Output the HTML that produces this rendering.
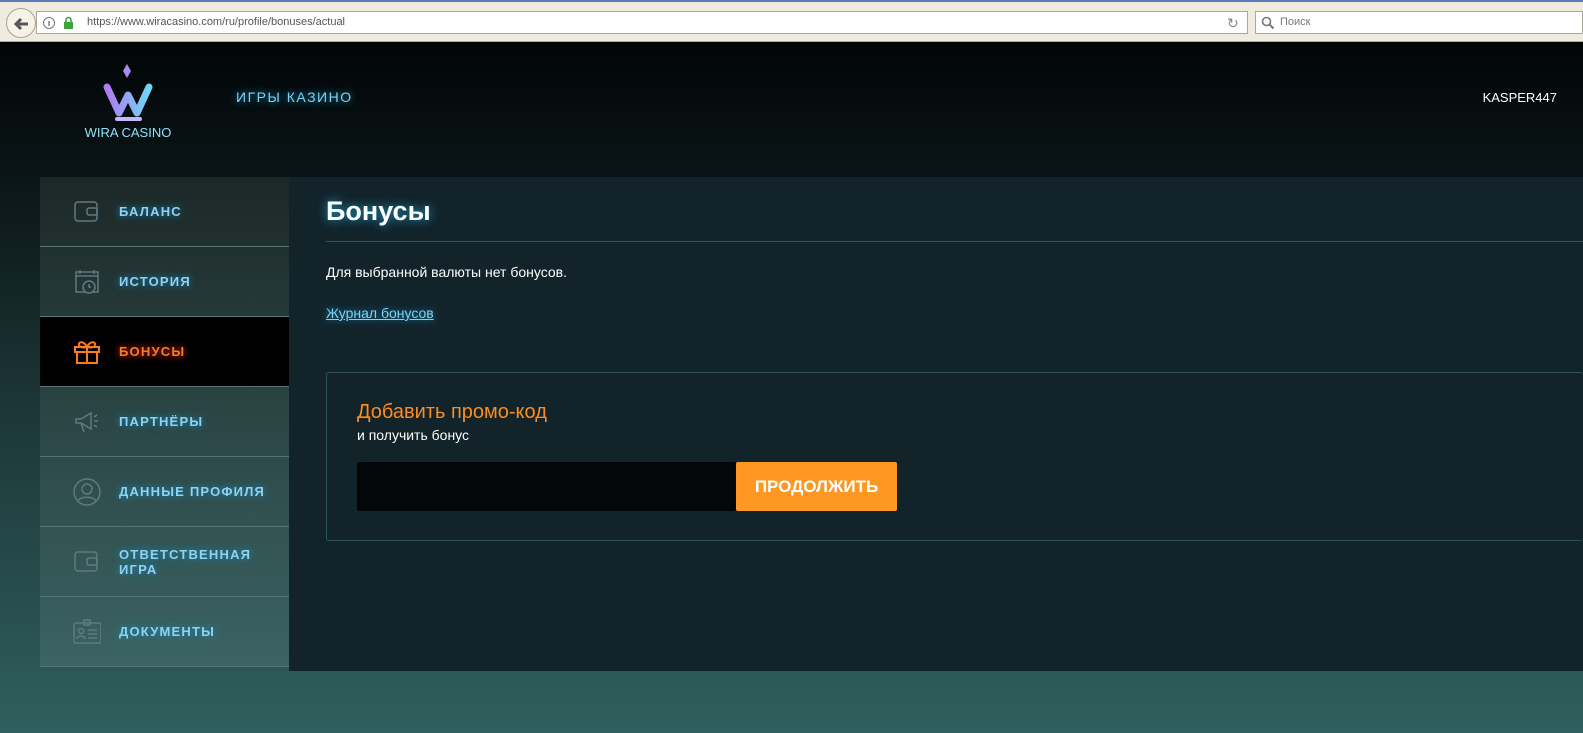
<!DOCTYPE html>
<html><head><meta charset="utf-8"><style>
*{margin:0;padding:0;box-sizing:border-box}
body{width:1583px;height:733px;overflow:hidden;font-family:"Liberation Sans","DejaVu Sans",sans-serif;background:linear-gradient(180deg,#020506 42px,#0a1416 170px,#1c3536 400px,#2f5f5e 733px);position:relative}
.bar{position:absolute;left:0;top:0;width:1583px;height:42px;background:#efebde;border-top:2px solid #5a7ab8;border-bottom:1px solid #aaa}
.back{position:absolute;left:6px;top:6px;width:30px;height:30px;border-radius:50%;border:1px solid #a9a48f;background:#f5f2e8}
.url{position:absolute;left:36px;top:9px;width:1212px;height:23px;background:#fff;border:1px solid #aba89a;font-size:11px;color:#555;padding:4px 0 0 50px}
.search{position:absolute;left:1255px;top:9px;width:328px;height:23px;background:#fff;border:1px solid #aba89a;font-size:11px;color:#777;padding:4px 0 0 24px}
.nav{position:absolute;left:236px;top:89px;color:#7fd2f0;font-size:14px;letter-spacing:1.5px;text-shadow:0 0 8px #1aa0d8}
.user{position:absolute;right:26px;top:90px;color:#fff;font-size:13px}
.side{position:absolute;left:40px;top:177px;width:249px;height:490px}
.it{height:70px;border-bottom:1px solid #567474;display:flex;align-items:center;padding-left:33px;color:#8fd3f2;font-size:13px;font-weight:bold;letter-spacing:1.2px;text-shadow:0 0 8px #1a90c8}
.it svg{width:28px;height:28px;margin-right:18px;flex:none}
.act{background:#000;color:#ff7a1a;text-shadow:0 0 8px #ff3a00}
.panel{position:absolute;left:289px;top:177px;width:1294px;height:494px;background:#12232a}
h1{position:absolute;left:37px;top:19px;color:#fff;font-size:27px;text-shadow:0 0 10px #1fa3d0}
.hr{position:absolute;left:37px;top:64px;right:0;height:1px;background:#2c5858}
.t{position:absolute;left:37px;top:87px;color:#fff;font-size:14px}
.lk{position:absolute;left:37px;top:128px;color:#7fd2f0;font-size:14px;text-decoration:underline;text-shadow:0 0 8px #1a90c8}
.box{position:absolute;left:37px;top:195px;right:0;height:169px;border:1px solid #2c5656;border-right:none;border-radius:3px}
.box h2{position:absolute;left:30px;top:28px;color:#ff8c1e;font-size:20px;font-weight:normal}
.box p{position:absolute;left:30px;top:54px;color:#fff;font-size:14px}
.in{position:absolute;left:30px;top:89px;width:379px;height:49px;background:#030708;border-radius:2px}
.btn{position:absolute;left:409px;top:89px;width:161px;height:49px;background:#ff9822;color:#fff;font-size:17px;font-weight:bold;text-align:center;line-height:49px;border-radius:2px}
</style></head><body>
<div class="bar">
<div class="back"><svg width="30" height="30" viewBox="0 0 30 30"><path d="M21 15H10M14 10l-5 5 5 5" stroke="#555" stroke-width="3" fill="none"/></svg></div>
<div class="url"><svg style="position:absolute;left:6px;top:4px" width="34" height="14"><circle cx="6" cy="7" r="5.5" stroke="#777" fill="none"/><rect x="5.3" y="5" width="1.4" height="5" fill="#777"/><rect x="21" y="6" width="9" height="7" fill="#3fa33f"/><path d="M23 6V4a2.5 2.5 0 015 0v2" stroke="#3fa33f" stroke-width="1.6" fill="none"/></svg>https://www.wiracasino.com/ru/profile/bonuses/actual<span style="position:absolute;left:1190px;top:3px;color:#888;font-size:14px">↻</span></div>
<div class="search"><svg style="position:absolute;left:5px;top:4px" width="14" height="14"><circle cx="5.5" cy="5.5" r="4" stroke="#777" stroke-width="1.6" fill="none"/><path d="M8.5 8.5l4 4" stroke="#777" stroke-width="2"/></svg>Поиск</div>
</div>
<svg style="position:absolute;left:80px;top:62px" width="100" height="80" viewBox="0 0 100 80">
<defs><linearGradient id="g" x1="0" x2="1"><stop offset="0" stop-color="#b07cf0"/><stop offset="1" stop-color="#6fd6f4"/></linearGradient></defs>
<path d="M47 2l4 7-4 7-4-7z" fill="#a88cf0"/>
<path d="M27 25l12 26 9-18 9 18 12-26" stroke="url(#g)" stroke-width="7" fill="none" stroke-linecap="round" stroke-linejoin="round"/>
<rect x="35" y="55" width="27" height="4" rx="2" fill="#c6b8f8"/>
<text x="48" y="75" text-anchor="middle" fill="#8fe2f8" font-size="13" font-family="Liberation Sans">WIRA CASINO</text></svg>
<div class="nav">ИГРЫ КАЗИНО</div>
<div class="user">KASPER447</div>
<div class="side" style="background:linear-gradient(180deg,#1c2827,#3b6463)">
<div class="it"><svg viewBox="0 0 28 28" fill="none" stroke="#5f7a80" stroke-width="1.5"><rect x="2" y="4" width="22" height="19" rx="3"/><rect x="14" y="10" width="10" height="7" rx="2"/></svg>БАЛАНС</div>
<div class="it"><svg viewBox="0 0 28 28" fill="none" stroke="#5f7a80" stroke-width="1.5"><rect x="3" y="4" width="22" height="20"/><path d="M3 8h22M7 2v4M21 2v4"/><circle cx="16" cy="19" r="6" fill="#253838"/><path d="M16 16v3h2"/></svg>ИСТОРИЯ</div>
<div class="it act"><svg viewBox="0 0 28 28" fill="none" stroke="#ff7a1a" stroke-width="2"><rect x="2" y="9" width="24" height="5"/><rect x="4" y="14" width="20" height="11"/><path d="M14 9v16M14 9c-3-6-9-6-8-2s8 2 8 2c3-6 9-6 8-2s-8 2-8 2"/></svg>БОНУСЫ</div>
<div class="it"><svg viewBox="0 0 28 28" fill="none" stroke="#5f7a80" stroke-width="1.5"><path d="M3 11h5l10-6v16l-10-6H3zM8 15l3 9M21 9l3-2M21 13h4M21 17l3 2"/></svg>ПАРТНЁРЫ</div>
<div class="it"><svg viewBox="0 0 28 28" fill="none" stroke="#5f7a80" stroke-width="1.5"><circle cx="14" cy="14" r="13"/><circle cx="14" cy="11" r="5"/><path d="M5 23c2-5 16-5 18 0"/></svg>ДАННЫЕ ПРОФИЛЯ</div>
<div class="it"><svg viewBox="0 0 28 28" fill="none" stroke="#5f7a80" stroke-width="1.5"><rect x="2" y="4" width="22" height="19" rx="3"/><rect x="14" y="10" width="10" height="7" rx="2"/></svg>ОТВЕТСТВЕННАЯ<br>ИГРА</div>
<div class="it" style="border-bottom:1px solid #567474"><svg viewBox="0 0 28 28" fill="none" stroke="#5f7a80" stroke-width="1.5"><rect x="1" y="5" width="27" height="20" rx="2"/><rect x="11" y="2" width="6" height="5"/><circle cx="8" cy="13" r="2.5"/><path d="M4 21c1-4 7-4 8 0M15 12h9M15 16h9M15 20h9"/></svg>ДОКУМЕНТЫ</div>
</div>
<div class="panel">
<h1>Бонусы</h1><div class="hr"></div>
<div class="t">Для выбранной валюты нет бонусов.</div>
<div class="lk">Журнал бонусов</div>
<div class="box"><h2>Добавить промо-код</h2><p>и получить бонус</p><div class="in"></div><div class="btn">ПРОДОЛЖИТЬ</div></div>
</div>
</body></html>
